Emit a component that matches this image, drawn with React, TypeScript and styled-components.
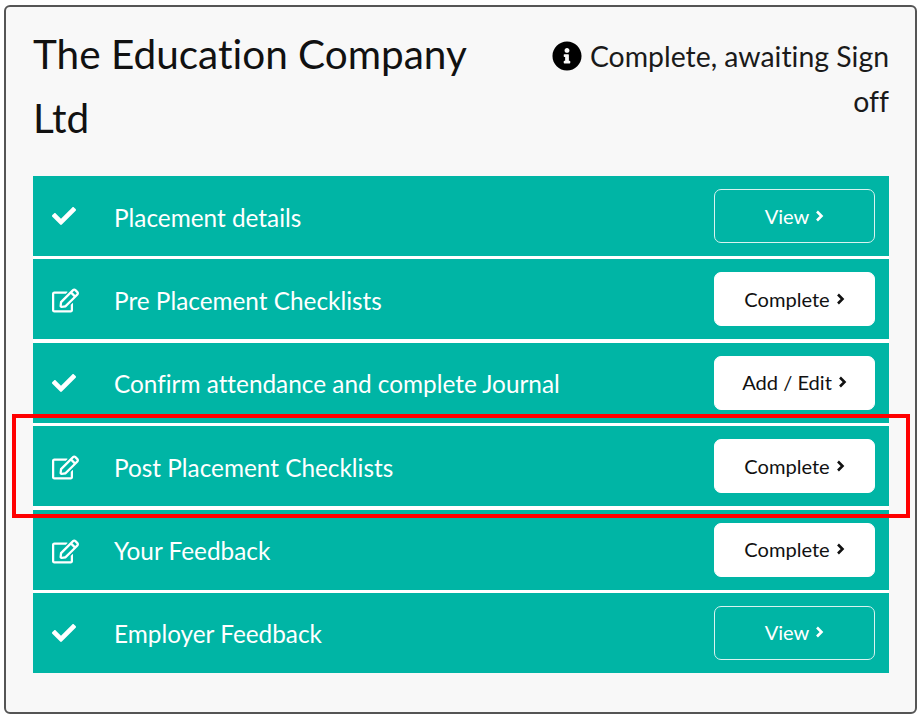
import React from "react";
import styled, { createGlobalStyle } from "styled-components";
import { FaCheck, FaRegEdit, FaInfoCircle } from "react-icons/fa";

const Global = createGlobalStyle`
  html, body { margin: 0; padding: 0; background: #fff; }
  body { font-family: Lato, "Open Sans", sans-serif; font-variant-ligatures: none; }
`;

const Page = styled.div`
  position: relative;
  width: 923px;
  height: 717px;
  padding: 5px 6px 3px 4px;
  box-sizing: border-box;
`;

const Card = styled.section`
  height: 100%;
  box-sizing: border-box;
  border: 2px solid #555;
  border-radius: 6px;
  background: #f8f8f8;
  padding: 15px 26px 0 27px;
`;

const Header = styled.header`
  display: flex;
  justify-content: space-between;
  align-items: flex-start;
  height: 154px;
`;

const Title = styled.h1`
  margin: 0;
  width: 470px;
  font-size: 40.5px;
  font-weight: 400;
  line-height: 64px;
  color: #111;
`;

const Status = styled.div`
  width: 345px;
  margin-top: 12px;
  text-align: right;
  font-size: 28.4px;
  line-height: 45px;
  color: #1a1a1a;
`;

const StatusIcon = styled(FaInfoCircle)`
  width: 30px;
  height: 30px;
  margin-right: 8px;
  vertical-align: -4px;
  color: #000;
`;

const List = styled.div`
  display: flex;
  flex-direction: column;
  gap: 3.4px;
  background: #fff;
`;

const Row = styled.div`
  display: flex;
  align-items: center;
  height: 80px;
  padding: 0 14px 0 19px;
  background: #00b5a5;
  color: #fff;
`;

const IconSlot = styled.span<{ $edit?: boolean }>`
  display: flex;
  align-items: center;
  width: 62px;
  padding-top: ${(p) => (p.$edit ? "3px" : "0")};
  color: #fff;
`;

const Label = styled.span`
  flex: 1;
  padding-top: 2px;
  font-size: 24.35px;
  color: #fff;
`;

const Action = styled.button<{ $filled?: boolean }>`
  display: flex;
  align-items: center;
  justify-content: center;
  gap: 6px;
  width: 161px;
  height: 54px;
  padding: 0 0 1px;
  border: 1px solid ${(p) => (p.$filled ? "#fff" : "#d9f3f0")};
  border-radius: 7px;
  background: ${(p) => (p.$filled ? "#fff" : "transparent")};
  color: ${(p) => (p.$filled ? "#111" : "#fff")};
  font-family: inherit;
  font-size: 20.1px;
`;

const Chevron = styled.svg`
  width: 9px;
  height: 14px;
  fill: none;
  stroke: currentColor;
  stroke-width: 2.6;
`;

const Highlight = styled.div`
  position: absolute;
  left: 12px;
  top: 414px;
  width: 898px;
  height: 104px;
  box-sizing: border-box;
  border: 4px solid #f00;
  pointer-events: none;
`;

const rows = [
  { icon: "check", label: "Placement details", action: "View", filled: false },
  { icon: "edit", label: "Pre Placement Checklists", action: "Complete", filled: true },
  { icon: "check", label: "Confirm attendance and complete Journal", action: "Add / Edit", filled: true },
  { icon: "edit", label: "Post Placement Checklists", action: "Complete", filled: true },
  { icon: "edit", label: "Your Feedback", action: "Complete", filled: true },
  { icon: "check", label: "Employer Feedback", action: "View", filled: false },
];

export default function App() {
  return (
    <Page>
      <Global />
      <Card>
        <Header>
          <Title>The Education Company Ltd</Title>
          <Status>
            <StatusIcon />
            Complete, awaiting Sign off
          </Status>
        </Header>
        <List>
          {rows.map((r) => (
            <Row key={r.label}>
              <IconSlot $edit={r.icon === "edit"}>
                {r.icon === "check" ? <FaCheck size={24} /> : <FaRegEdit size={27} />}
              </IconSlot>
              <Label>{r.label}</Label>
              <Action $filled={r.filled}>
                {r.action}
                <Chevron viewBox="0 0 9 14">
                  <path d="M2 2.500 6.500 7 2 11.500" />
                </Chevron>
              </Action>
            </Row>
          ))}
        </List>
      </Card>
      <Highlight />
    </Page>
  );
}
